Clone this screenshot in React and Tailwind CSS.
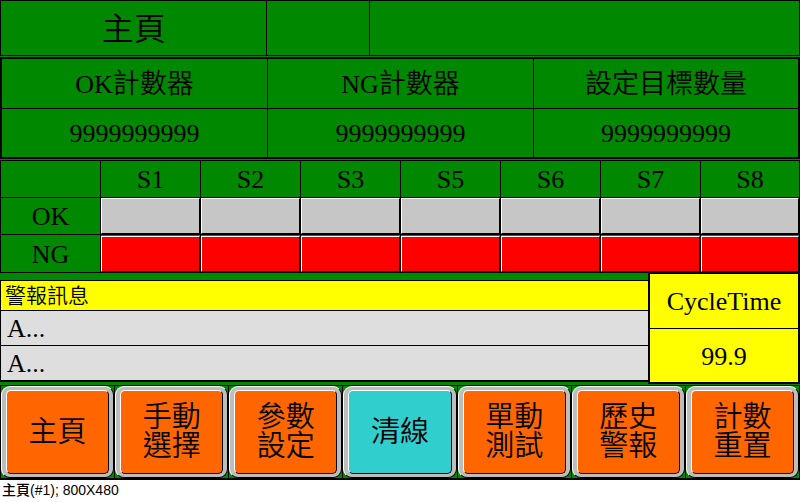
import React from "react";

const counters = [
  { id: "ok", latin: "OK", label: "計數器", value: "9999999999" },
  { id: "ng", latin: "NG", label: "計數器", value: "9999999999" },
  { id: "target", latin: "", label: "設定目標數量", value: "9999999999" },
];

const stations = ["S1", "S2", "S3", "S5", "S6", "S7", "S8"];

const actions = [
  { lines: ["主頁"] },
  { lines: ["手動", "選擇"] },
  { lines: ["參數", "設定"] },
  { lines: ["清線"], active: true },
  { lines: ["單動", "測試"] },
  { lines: ["歷史", "警報"] },
  { lines: ["計數", "重置"] },
];

function Header() {
  return (
    <header className="grid h-14 grid-cols-[267fr_103fr_430fr] border border-black">
      <h1 className="flex items-center justify-center border-r border-black pt-0.5 text-[32px] leading-none font-[350]">
        主頁
      </h1>
      <div className="border-r border-black" />
      <div />
    </header>
  );
}

function Counters() {
  return (
    <dl className="mt-px grid grid-cols-[266fr_266fr_264fr] border-2 border-black">
      {counters.map((c) => (
        <div key={c.id} className="border-r border-black last:border-r-0">
          <dt className="flex h-[50px] items-center justify-center border-b border-black pt-0.5 text-[27px] leading-none font-[350]">
            <span className="text-[26px]">{c.latin}</span>
            {c.label}
          </dt>
          <dd className="flex h-12 items-center justify-center pt-0.5 text-[26px] leading-none">{c.value}</dd>
        </div>
      ))}
    </dl>
  );
}

function Lamp({ label, color }) {
  return (
    <td className="border border-black p-0" aria-label={label}>
      <div className={`h-9 border-t border-l border-t-white border-l-white border-r border-b border-r-black border-b-black ${color}`} />
    </td>
  );
}

function StationTable() {
  return (
    <table className="mt-px w-full table-fixed border-collapse text-center text-[26px] leading-none">
      <colgroup>
        <col />
        {stations.map((s) => (
          <col key={s} className="last:w-[12.4%]" />
        ))}
      </colgroup>
      <thead>
        <tr className="h-[37px]">
          <td className="border border-black p-0" />
          {stations.map((s) => (
            <th key={s} scope="col" className="border border-black p-0 pt-0.5 font-normal">{s}</th>
          ))}
        </tr>
      </thead>
      <tbody>
        <tr className="h-[37px]">
          <th scope="row" className="border border-black p-0 pt-0.5 font-normal">OK</th>
          {stations.map((s) => <Lamp key={s} label={`${s} OK`} color="bg-[#c6c6c6]" />)}
        </tr>
        <tr className="h-[38px]">
          <th scope="row" className="border border-black p-0 pt-0.5 font-normal">NG</th>
          {stations.map((s) => <Lamp key={s} label={`${s} NG`} color="bg-[#ff0000]" />)}
        </tr>
      </tbody>
    </table>
  );
}

function Alarms() {
  return (
    <section className="mt-[7px] flex-1 self-start border-t border-b-2 border-l border-black">
      <h2 className="flex h-[29px] items-center bg-[#ffff00] pt-0.5 pl-1 text-[21px] leading-none font-[350]">警報訊息</h2>
      <p className="flex h-[35px] items-center border-t border-black bg-[#dedede] pt-0.5 pl-1.5 text-[26px] leading-none">A...</p>
      <p className="flex h-[35px] items-center border-t border-black bg-[#dedede] pt-0.5 pl-1.5 text-[26px] leading-none">A...</p>
    </section>
  );
}

function CycleTime() {
  return (
    <dl className="w-[152px] border-2 border-t border-black bg-[#ffff00]">
      <dt className="flex h-[55px] items-center justify-center border-b border-black pt-0.5 text-[26px] leading-none">CycleTime</dt>
      <dd className="flex h-[53px] items-center justify-center pt-0.5 text-[26px] leading-none">99.9</dd>
    </dl>
  );
}

function ActionButton({ lines, active }) {
  return (
    <button
      type="button"
      className="h-[92px] min-w-0 cursor-pointer rounded-[9px] border border-t-white border-l-white border-r-black border-b-black bg-[#bdbdbd] px-1 py-[3px]"
    >
      <span
        className={`flex h-full flex-col items-center justify-center rounded-[5px] border border-t-white border-l-white border-r-black border-b-black text-[29px] leading-[29px] font-[350] ${active ? "bg-[#31cece]" : "bg-[#ff6600]"}`}
      >
        {lines.map((line) => (
          <span key={line}>{line}</span>
        ))}
      </span>
    </button>
  );
}

export default function App() {
  return (
    <main className="bg-white font-['Liberation_Serif','Noto_Sans_CJK_TC',serif] text-black">
      <div className="bg-[#008800]">
        <Header />
        <Counters />
        <StationTable />
        <div className="flex">
          <Alarms />
          <CycleTime />
        </div>
        <nav className="mt-px grid grid-cols-7 border-t border-r border-b-2 border-black">
          {actions.map((a) => (
            <div key={a.lines.join("")} className="grid border-l border-black">
              <ActionButton {...a} />
            </div>
          ))}
        </nav>
      </div>
      <footer className="px-0.5 pt-0.5 font-['Liberation_Sans','Noto_Sans_CJK_TC',sans-serif] text-[14px] leading-4 font-medium">
        主頁(#1); 800X480
      </footer>
    </main>
  );
}
